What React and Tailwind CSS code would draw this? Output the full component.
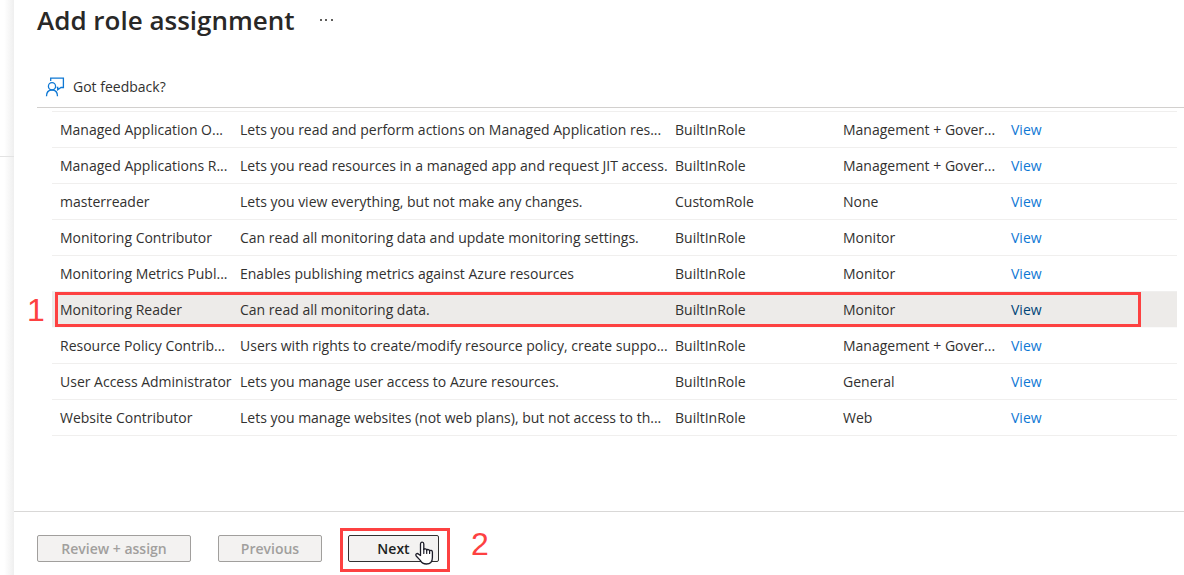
const roles = [
  ["Managed Application O...", "Lets you read and perform actions on Managed Application res...", "BuiltInRole", "Management + Gover..."],
  ["Managed Applications R...", "Lets you read resources in a managed app and request JIT access.", "BuiltInRole", "Management + Gover..."],
  ["masterreader", "Lets you view everything, but not make any changes.", "CustomRole", "None"],
  ["Monitoring Contributor", "Can read all monitoring data and update monitoring settings.", "BuiltInRole", "Monitor"],
  ["Monitoring Metrics Publ...", "Enables publishing metrics against Azure resources", "BuiltInRole", "Monitor"],
  ["Monitoring Reader", "Can read all monitoring data.", "BuiltInRole", "Monitor"],
  ["Resource Policy Contrib...", "Users with rights to create/modify resource policy, create suppo...", "BuiltInRole", "Management + Gover..."],
  ["User Access Administrator", "Lets you manage user access to Azure resources.", "BuiltInRole", "General"],
  ["Website Contributor", "Lets you manage websites (not web plans), but not access to th...", "BuiltInRole", "Web"],
];

function FeedbackIcon() {
  return (
    <svg className="h-5 w-5" viewBox="0 0 20 20" fill="none" stroke="#0f78d4" strokeWidth="1.3" aria-hidden="true">
      <circle cx="7" cy="9.2" r="3.6" />
      <path d="M1.500 19.300c0-3.800 2.200-6.300 5.500-6.300s5.500 2.500 5.500 6.300" />
      <path d="M5.700 4V1.200h12.700v9.300h-2.400l-3.300 2.200v-2.400H11.700" />
    </svg>
  );
}

function HandCursor() {
  return (
    <svg className="pointer-events-none absolute -bottom-[3px] right-[5px] h-6 w-[19px]" viewBox="0 0 19 24" aria-hidden="true">
      <path
        d="M5.500 14.500V3c0-2.500 3.300-2.500 3.300 0v5.500c.5-1 2.700-.8 2.900.6.600-1 2.700-.7 2.900.7.700-.9 2.800-.5 2.800 1.300v5.400c0 4.200-2.200 6.500-6 6.500-3.200 0-4.800-1.100-6.100-3.600L1.200 15c-1.100-2 1-3.300 2.400-1.800z"
        fill="#fff"
        stroke="#1c1c28"
        strokeWidth="1.3"
        strokeLinejoin="round"
      />
      <path d="M8.800 8v4.500M11.700 9v3.500M14.600 10v2.500" fill="none" stroke="#1c1c28" strokeWidth="1.200" strokeLinecap="round" />
    </svg>
  );
}

function RoleRow({ role, selected }) {
  const [name, description, type, category] = role;
  return (
    <tr className={selected ? "relative h-9 border-b border-[#fafafa] bg-[#edebe9]" : "h-9 border-b border-[#f0efee]"}>
      <td className="pl-2">
        {name}
        {selected && (
          <>
            <span className="pointer-events-none absolute inset-y-0 left-[3px] right-9 border-3 border-[#fd4141]" />
            <span className="absolute -left-[25px] top-0 font-['Liberation_Sans',sans-serif] text-[32px] leading-9 text-[#fd4141]">1</span>
          </>
        )}
      </td>
      <td className="pl-2">{description}</td>
      <td className="pl-2">{type}</td>
      <td className="pl-2">{category}</td>
      <td className="pl-2 pt-px">
        <a href="#view" aria-label={"View " + name} className={selected ? "text-[#004578]" : "text-[#0f78d4]"}>
          View
        </a>
      </td>
    </tr>
  );
}

export default function App() {
  return (
    <div className="flex min-h-screen bg-white font-['Open_Sans','Noto_Sans',sans-serif] text-[14px] leading-5 text-[#323130]">
      <aside className="flex w-[14px] shrink-0 flex-col bg-linear-to-r from-white from-30% to-[#efefef]">
        <div className="h-[157px] border-b border-[#e3e3e3]" />
      </aside>
      <main className="flex min-w-0 flex-1 flex-col">
        <header className="flex h-10 items-center gap-6 pl-[23px]">
          <h1 className="text-[26px] font-semibold leading-10 text-[#292827]">Add role assignment</h1>
          <button type="button" aria-label="More actions">
            <svg className="h-1 w-4" viewBox="0 0 16 4" fill="#605e5c" aria-hidden="true">
              <rect x="1" y="1" width="2" height="2" />
              <rect x="6" y="1" width="2" height="2" />
              <rect x="12" y="1" width="2" height="2" />
            </svg>
          </button>
        </header>
        <div className="ml-[23px] mt-[26px] flex h-[42px] items-center border-b border-[#d2d0ce] pl-2">
          <button type="button" className="flex items-center gap-2">
            <FeedbackIcon />
            Got feedback?
          </button>
        </div>
        <div className="flex-1 pb-8 pl-[38px] pr-[7px] pt-[3px]">
          <table className="w-full table-fixed border-collapse whitespace-nowrap border-t border-[#f0efee]">
            <colgroup>
              <col className="w-[180px]" />
              <col />
              <col className="w-[168px]" />
              <col className="w-[168px]" />
              <col className="w-[174px]" />
            </colgroup>
            <tbody>
              {roles.map((role) => (
                <RoleRow key={role[0]} role={role} selected={role[0] === "Monitoring Reader"} />
              ))}
            </tbody>
          </table>
        </div>
        <footer className="flex h-16 items-start border-t border-[#d9d8d7] pl-[23px] pt-[23px] font-semibold">
          <button type="button" disabled className="h-[27px] w-[154px] rounded-xs border border-[#a19f9d] bg-[#f3f2f1] text-[#a19f9d]">
            Review + assign
          </button>
          <button type="button" disabled className="ml-[27px] h-[27px] w-[104px] rounded-xs border border-[#a19f9d] bg-[#f3f2f1] text-[#a19f9d]">
            Previous
          </button>
          <div className="relative ml-[26px]">
            <button type="button" className="h-[27px] w-[91px] rounded-xs border border-[#323130] bg-[#f3f2f1] text-[#201f1e]">
              Next
            </button>
            <HandCursor />
            <span className="pointer-events-none absolute -bottom-[10px] -left-2 -right-[11px] -top-[7px] border-3 border-[#fd4141]" />
            <span className="absolute -top-[9px] left-full ml-8 font-['Liberation_Sans',sans-serif] text-[32px] font-normal leading-9 text-[#fd4141]">2</span>
          </div>
        </footer>
      </main>
    </div>
  );
}
